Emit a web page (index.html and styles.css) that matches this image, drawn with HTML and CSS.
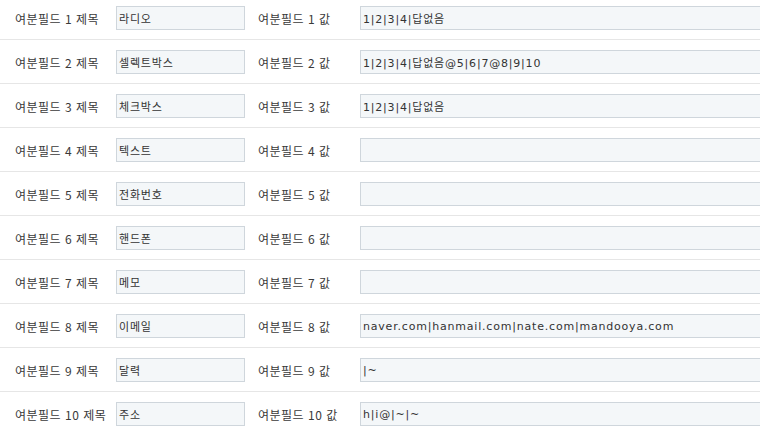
FILE: index.html
```html
<!DOCTYPE html>
<html lang="ko">
<head>
    <meta charset="UTF-8">
    <title>여분필드 설정</title>
    <link rel="stylesheet" href="styles.css">
</head>
<body>
<table class="extra">
    <colgroup>
        <col class="c-label">
        <col class="c-title">
        <col class="c-label2">
        <col>
    </colgroup>
    <tr>
        <th>여분필드 1 제목</th>
        <td><input type="text" class="ipt" value="라디오"></td>
        <th class="sub">여분필드 1 값</th>
        <td><input type="text" class="ipt wide" value="1|2|3|4|답없음"></td>
    </tr>
    <tr>
        <th>여분필드 2 제목</th>
        <td><input type="text" class="ipt" value="셀렉트박스"></td>
        <th class="sub">여분필드 2 값</th>
        <td><input type="text" class="ipt wide" value="1|2|3|4|답없음@5|6|7@8|9|10"></td>
    </tr>
    <tr>
        <th>여분필드 3 제목</th>
        <td><input type="text" class="ipt" value="체크박스"></td>
        <th class="sub">여분필드 3 값</th>
        <td><input type="text" class="ipt wide" value="1|2|3|4|답없음"></td>
    </tr>
    <tr>
        <th>여분필드 4 제목</th>
        <td><input type="text" class="ipt" value="텍스트"></td>
        <th class="sub">여분필드 4 값</th>
        <td><input type="text" class="ipt wide" value=""></td>
    </tr>
    <tr>
        <th>여분필드 5 제목</th>
        <td><input type="text" class="ipt" value="전화번호"></td>
        <th class="sub">여분필드 5 값</th>
        <td><input type="text" class="ipt wide" value=""></td>
    </tr>
    <tr>
        <th>여분필드 6 제목</th>
        <td><input type="text" class="ipt" value="핸드폰"></td>
        <th class="sub">여분필드 6 값</th>
        <td><input type="text" class="ipt wide" value=""></td>
    </tr>
    <tr>
        <th>여분필드 7 제목</th>
        <td><input type="text" class="ipt" value="메모"></td>
        <th class="sub">여분필드 7 값</th>
        <td><input type="text" class="ipt wide" value=""></td>
    </tr>
    <tr>
        <th>여분필드 8 제목</th>
        <td><input type="text" class="ipt" value="이메일"></td>
        <th class="sub">여분필드 8 값</th>
        <td><input type="text" class="ipt wide" value="naver.com|hanmail.com|nate.com|mandooya.com"></td>
    </tr>
    <tr>
        <th>여분필드 9 제목</th>
        <td><input type="text" class="ipt" value="달력"></td>
        <th class="sub">여분필드 9 값</th>
        <td><input type="text" class="ipt wide" value="|~"></td>
    </tr>
    <tr>
        <th>여분필드 10 제목</th>
        <td><input type="text" class="ipt" value="주소"></td>
        <th class="sub">여분필드 10 값</th>
        <td><input type="text" class="ipt wide" value="h|i@|~|~"></td>
    </tr>
</table>
</body>
</html>
```

FILE: styles.css
```css
body {
    margin: 0;
    padding: 0;
    overflow: hidden;
    background: #fff;
    font-family: "Noto Sans CJK KR", "Liberation Sans", sans-serif;
    font-size: 12px;
    color: #333;
}

.extra {
    width: 760px;
    margin-top: -4px;
    border-collapse: collapse;
    table-layout: fixed;
}

.extra col.c-label {
    width: 116px;
}

.extra col.c-title {
    width: 142px;
}

.extra col.c-label2 {
    width: 102px;
}

.extra tr {
    border-bottom: 1px solid #e6e6e6;
}

.extra th,
.extra td {
    padding: 10px 0 9px;
    text-align: left;
    font-weight: normal;
    white-space: nowrap;
    vertical-align: middle;
}

.extra th {
    padding-left: 15px;
    letter-spacing: 0.5px;
    color: #3a3a3a;
}

.extra th.sub {
    padding-left: 0;
}

.ipt {
    display: block;
    box-sizing: border-box;
    width: 129px;
    height: 24px;
    margin: 0;
    padding: 0 2px;
    border: 1px solid #cfd6dc;
    background: #f4f7f9;
    font-family: "DejaVu Sans", "Noto Sans CJK KR", sans-serif;
    font-size: 11px;
    letter-spacing: 0.8px;
    color: #333;
    outline: none;
}

.ipt.wide {
    width: 420px;
}
```
